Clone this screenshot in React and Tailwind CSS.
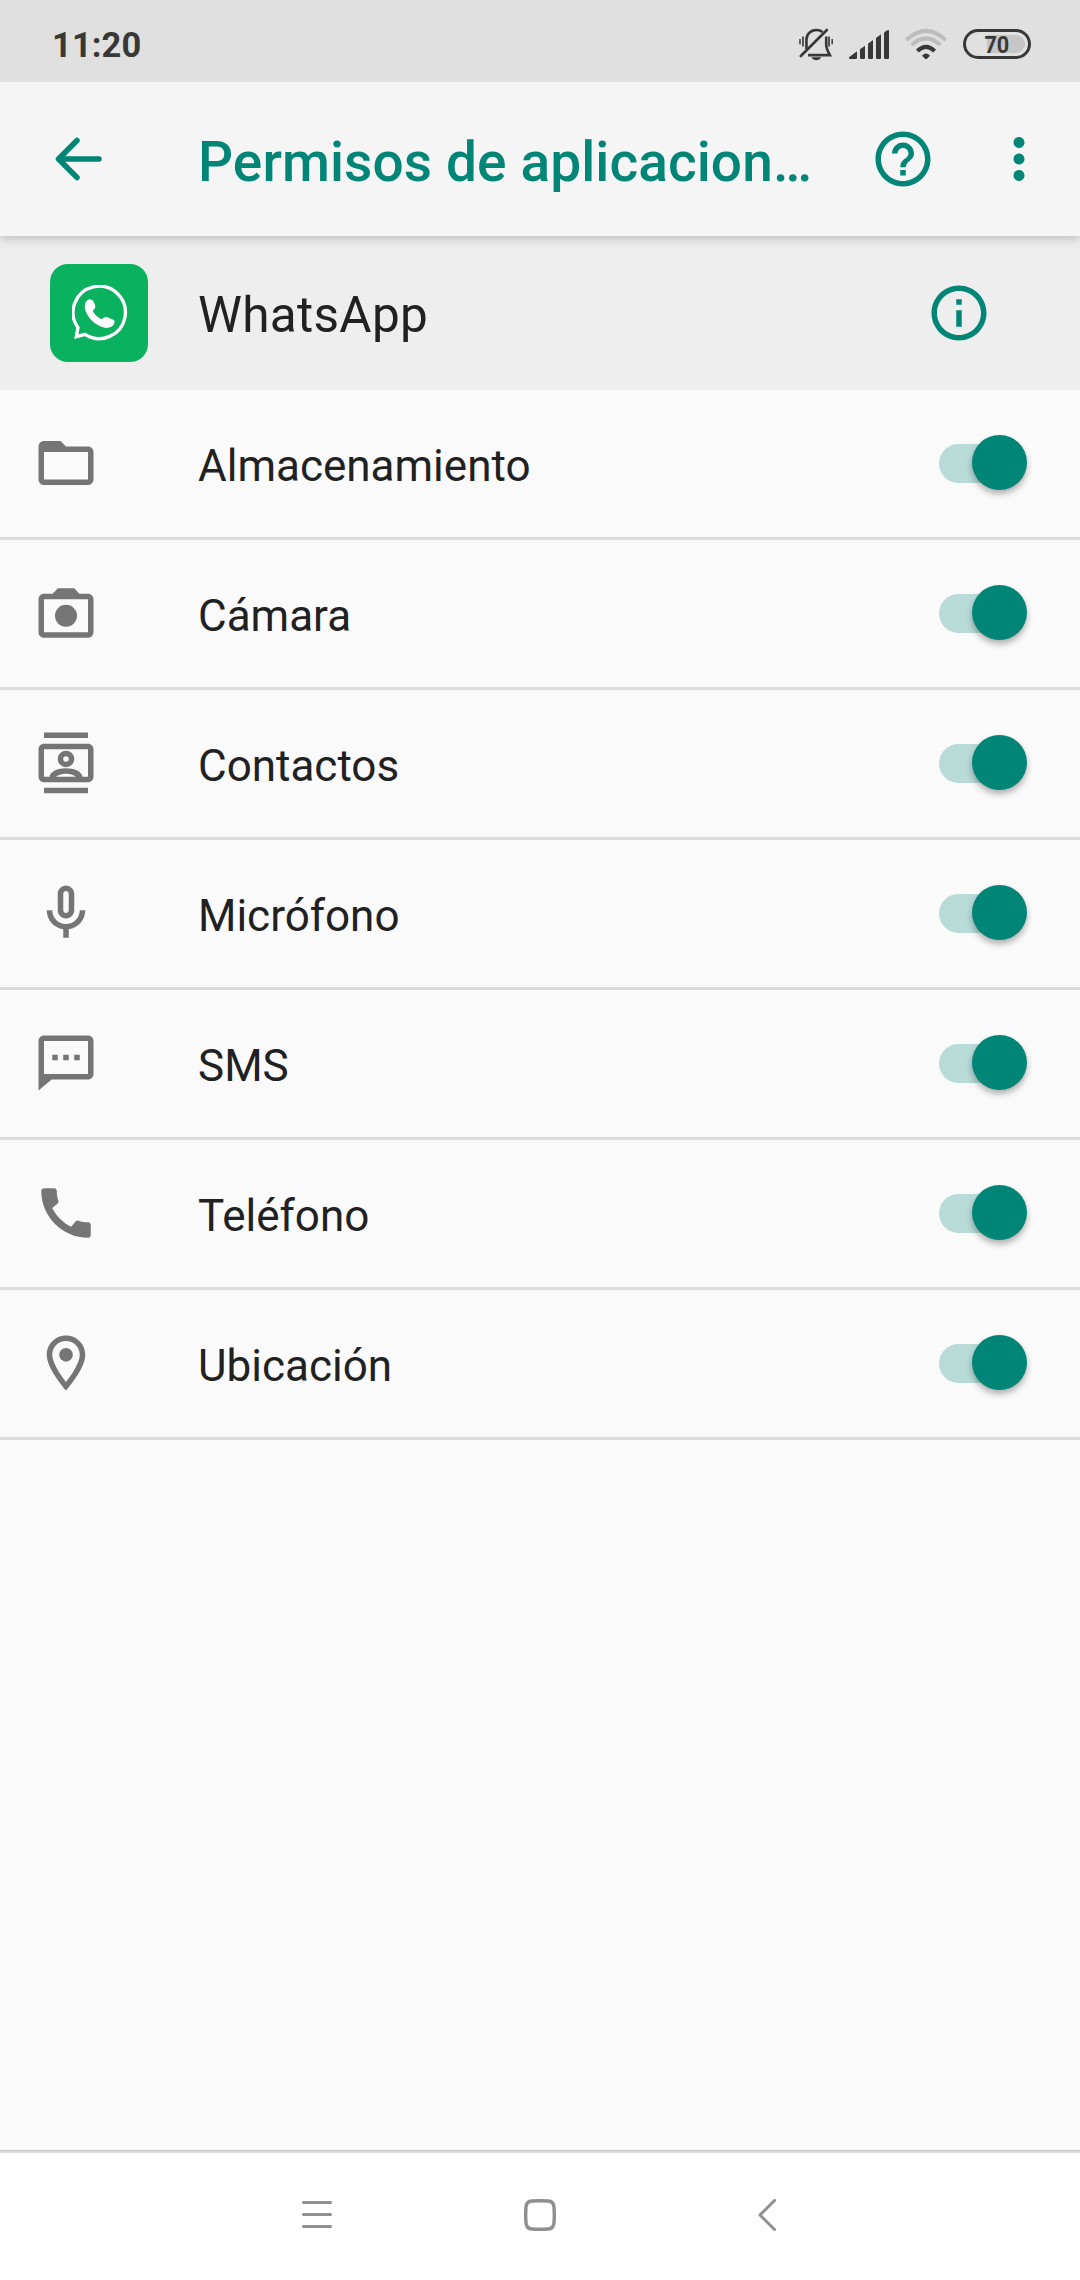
import { MdFolderOpen, MdCall, MdHelpOutline, MdInfoOutline, MdMoreVert } from "react-icons/md";

const CameraIcon = () => (
  <svg viewBox="0 0 24 24" className="size-[66px]" fill="currentColor">
    <path fillRule="evenodd" d="M9 3 7.17 5H4c-1.1 0-2 .9-2 2v12c0 1.1.9 2 2 2h16c1.1 0 2-.9 2-2V7c0-1.1-.9-2-2-2h-3.17L15 3H9zM4 7h16v12H4V7z" />
    <circle cx="12" cy="13" r="4" />
  </svg>
);

const ContactsIcon = () => (
  <svg viewBox="0 0 24 24" className="size-[66px]" fill="currentColor">
    <path d="M4 .9h16v2H4zM4 21h16v2H4z" />
    <path fillRule="evenodd" d="M4 5h16c1.1 0 2 .9 2 2v10c0 1.1-.9 2-2 2H4c-1.1 0-2-.9-2-2V7c0-1.1.9-2 2-2zm0 2v10h16V7H4z" />
    <path fillRule="evenodd" d="M12 7.5a3 3 0 1 0 0 6 3 3 0 0 0 0-6zm0 2a1 1 0 1 1 0 2 1 1 0 0 1 0-2z" />
    <path d="M6 17.2c0-2.1 3-3.3 6-3.3s6 1.2 6 3.3h-2.2c-.8-.8-2.2-1.3-3.8-1.3s-3 .5-3.8 1.3z" />
  </svg>
);

const MicIcon = () => (
  <svg viewBox="0 0 24 24" className="size-[66px]" fill="currentColor">
    <path fillRule="evenodd" d="M12 14c1.66 0 3-1.34 3-3V5c0-1.66-1.34-3-3-3S9 3.34 9 5v6c0 1.66 1.34 3 3 3zm-1-9c0-.55.45-1 1-1s1 .45 1 1v6c0 .55-.45 1-1 1s-1-.45-1-1V5z" />
    <path d="M17 11c0 2.76-2.24 5-5 5s-5-2.24-5-5H5c0 3.53 2.61 6.43 6 6.92V21h2v-3.08c3.39-.49 6-3.39 6-6.92h-2z" />
  </svg>
);

const SmsIcon = () => (
  <svg viewBox="0 0 24 24" className="size-[66px]" fill="currentColor">
    <path fillRule="evenodd" d="M4 2h16c1.1 0 2 .9 2 2v12c0 1.1-.9 2-2 2H6.8L2 22V4c0-1.1.9-2 2-2zm0 2v12h16V4H4z" />
    <path d="M7 9h2v2H7zM11 9h2v2h-2zM15 9h2v2h-2z" />
  </svg>
);

const PinIcon = () => (
  <svg viewBox="0 0 24 24" className="size-[66px]" fill="currentColor">
    <path fillRule="evenodd" d="M12 2C8.13 2 5 5.13 5 9c0 5.25 7 13 7 13s7-7.75 7-13c0-3.87-3.13-7-7-7zM7 9c0-2.76 2.24-5 5-5s5 2.24 5 5c0 2.88-2.88 7.19-5 9.88C9.92 16.21 7 11.85 7 9z" />
    <circle cx="12" cy="9" r="2.5" />
  </svg>
);

const permissions = [
  { name: "Almacenamiento", icon: <MdFolderOpen className="size-[66px]" /> },
  { name: "Cámara", icon: <CameraIcon /> },
  { name: "Contactos", icon: <ContactsIcon /> },
  { name: "Micrófono", icon: <MicIcon /> },
  { name: "SMS", icon: <SmsIcon /> },
  { name: "Teléfono", icon: <MdCall className="size-[66px]" /> },
  { name: "Ubicación", icon: <PinIcon /> },
];

const StatusBar = () => (
  <div className="relative z-20 flex h-[82px] items-center bg-[#e0e0e0] pl-[52px] pr-[49px] pt-[6px] text-[#383838]">
    <span className="pt-[2px] text-[34.500px] font-bold leading-none tracking-[0.1px]">11:20</span>

    {/* muted bell */}
    <svg viewBox="54 82 108 100" className="ml-auto h-[33px] w-[36px]" fill="none" stroke="currentColor" strokeWidth="8">
      <path d="M79 146v-28c0-16 12-30 30-30 8 0 14 2 19 6M139 108v25c0 12 5 20 11 31H84" />
      <path d="M62 167 141 88" strokeLinecap="round" />
      <path d="M59.500 115v16M157 115v16" strokeWidth="4.500" />
      <path d="M68.500 108v30M147.500 108v30" strokeWidth="5" />
      <path d="M94 171h30c-3 6-9 9-15 9s-12-3-15-9z" fill="currentColor" stroke="none" />
    </svg>

    {/* signal */}
    <svg viewBox="204 84 126 93" className="ml-[14px] h-[31px] w-[42px]" fill="currentColor">
      <path d="M207 169 231 151v20q0 3-3 3h-18q-3 0-3-3zM240 145l15-11v37q0 3-3 3h-9q-3 0-3-3zM264 128l15-11v54q0 3-3 3h-9q-3 0-3-3zM288 111l15-11v71q0 3-3 3h-9q-3 0-3-3zM312 96q1-4 12-9 3 0 3 3v81q0 3-3 3h-9q-3 0-3-3z" />
    </svg>

    {/* wifi */}
    <svg viewBox="372 84 132 96" className="ml-[14px] h-[32px] w-[44px]" fill="none" strokeWidth="12">
      <path d="M379 120q59-55 118 0" stroke="#bdbdbd" />
      <path d="M395 135q43-40 86 0" stroke="#bdbdbd" />
      <path d="M412 153q26-25 52 0" stroke="currentColor" />
      <path d="M426 167q12-13 24 0l-9 9q-3 2-6 0z" fill="currentColor" />
    </svg>

    <div className="ml-[15px] flex h-[30px] w-[68px] items-center rounded-full border-[3px] border-current px-[3px]">
      <div className="flex h-[18px] w-full items-center justify-center rounded-full bg-linear-to-r from-transparent from-32% to-[#c6c6c6] to-32%">
        <span className="scale-x-90 pt-[2px] text-[24px] font-bold leading-none">70</span>
      </div>
    </div>
  </div>
);

const Toggle = () => (
  <div className="relative mb-px ml-auto flex h-[56px] w-[88px] items-center">
    <div className="h-[39px] w-[82px] rounded-full bg-[#b8dbd8]" />
    <div className="absolute right-[0.5px] top-0 size-[55px] rounded-full bg-[#008577] shadow-[0_4px_6px_rgba(0,0,0,0.3)]" />
  </div>
);

const App = () => {
  return (
    <div className="flex h-[2280px] w-[1080px] flex-col bg-[#fafafa] font-['Roboto',sans-serif] text-[#212121]">
      <StatusBar />

      <header className="relative z-10 flex h-[154px] items-center bg-[#f5f5f5] pl-[54px] pr-[28px] text-[#008577] shadow-[0_3px_10px_rgba(0,0,0,0.2)]">
        <svg viewBox="0 0 50 46" className="h-[46px] w-[50px]" fill="none" stroke="currentColor" strokeWidth="5.500" strokeLinecap="round" strokeLinejoin="round">
          <path d="M45 23H5M23 4.500 4.500 23 23 41.500" />
        </svg>
        <h1 className="ml-[94px] whitespace-nowrap pt-[6px] text-[55px] font-medium leading-none tracking-[0.1px]">Permisos de aplicacion…</h1>
        <MdHelpOutline className="ml-auto size-[66px]" />
        <MdMoreVert className="ml-[50px] size-[66px]" />
      </header>

      <section className="flex h-[154px] items-center bg-[#eeeeee] pl-[50px] pr-[88px]">
        <div className="flex size-[98px] items-center justify-center rounded-[18px] bg-[#0ab15e]">
          <svg viewBox="126 104 168 168" className="ml-[2px] size-[56px]" fill="none">
            <path d="M144 232A78.500 78.500 0 1 1 165 252L139 259z" stroke="#ffffff" strokeWidth="10" />
            <path d="M170 151c4-5 15-5 19 0 4 6 8 15 7 20-1 6-8 8-7 12 5 10 14 19 24 23 5 1 7-5 13-6 5-1 19 6 26 9 4 5 0 15-6 19-8 5-18 6-27 3-24-8-42-25-51-46-5-12-5-25 2-34z" fill="#ffffff" />
          </svg>
        </div>
        <h2 className="ml-[50px] pt-[6px] text-[49.500px] leading-none tracking-[0.3px]">WhatsApp</h2>
        <MdInfoOutline className="ml-auto size-[66px] text-[#008577]" />
      </section>

      <ul className="flex-1">
        {permissions.map((item) => (
          <li key={item.name} className="flex h-[150px] items-center border-b-[3px] border-[#dcdcdc] pl-[33px] pr-[53px]">
            <span className="pb-[1px] text-[#757575]">{item.icon}</span>
            <span className="ml-[99px] pt-[5px] text-[44px] leading-none">{item.name}</span>
            <Toggle />
          </li>
        ))}
      </ul>

      <div className="h-px bg-[#c4c4c4]" />
      <nav className="flex h-[129px] items-center border-t-2 border-[#dcdcdc] bg-white pb-[3px] pl-[302px] text-[#8f8f8f]">
        <svg viewBox="0 0 30 32" className="h-[32px] w-[30px]" fill="none" stroke="currentColor" strokeWidth="3" strokeLinecap="round">
          <path d="M1.500 3.500h27M1.500 15.500h27M1.500 27.500h27" />
        </svg>
        <svg viewBox="0 0 32 32" className="ml-[192px] size-[32px]" fill="none" stroke="currentColor" strokeWidth="3.400">
          <path d="M8 2q8-.6 16 0 5.500.3 6 6 .6 8 0 16-.5 5.700-6 6-8 .6-16 0-5.500-.3-6-6-.6-8 0-16 .5-5.700 6-6z" />
        </svg>
        <svg viewBox="0 0 18 32" className="ml-[202px] h-[32px] w-[18px]" fill="none" stroke="currentColor" strokeWidth="3" strokeLinecap="round" strokeLinejoin="round">
          <path d="M16.500 1.500 2 16l14.500 14.500" />
        </svg>
      </nav>
    </div>
  );
};

export default App;
